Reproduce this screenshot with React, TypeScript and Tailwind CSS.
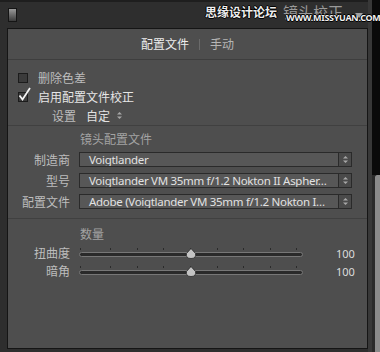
import React from 'react'

const CJK = "font-['Noto_Sans_CJK_SC','Noto_Sans',sans-serif]"
const LATIN = "font-['Noto_Sans','Open_Sans',sans-serif]"

function Stepper() {
  return (
    <svg width="7" height="9" viewBox="0 0 7 9" className="block">
      <path d="M1 3.5 L3.5 1 L6 3.5 Z" fill="#a8a8a8" />
      <path d="M1 5.5 L3.5 8 L6 5.5 Z" fill="#a8a8a8" />
    </svg>
  )
}

function Checkbox({ checked }: { checked?: boolean }) {
  return (
    <div className="relative w-[10px] h-[10px] border border-[#1c1c1c] bg-[#3b3b3b]">
      {checked && (
        <svg width="14" height="15" viewBox="0 0 14 15" className="absolute left-[-1px] top-[-6px]">
          <path d="M1.5 8.5 L4.5 12.5 L12 1" stroke="#f2f2f2" strokeWidth="1.8" fill="none" />
        </svg>
      )}
    </div>
  )
}

function SelectRow({ label, value }: { label: string; value: string }) {
  return (
    <div className="flex items-center h-[15px]">
      <span className={`${CJK} w-[62px] text-right text-[12px] text-[#bdbdbd] leading-none`}>{label}</span>
      <div className="ml-[9px] flex h-[15px]">
        <div className="w-[260px] h-full bg-[#575757] border border-[#2a2a2a] flex items-center pl-[9px] overflow-hidden">
          <span className={`${LATIN} text-[11.5px] tracking-[-0.3px] text-[#e2e2e2] leading-none whitespace-nowrap`}>{value}</span>
        </div>
        <div className="w-[13px] h-full bg-[#4a4a4a] border border-[#2a2a2a] border-l-0 flex items-center justify-center">
          <Stepper />
        </div>
      </div>
    </div>
  )
}

const TICKS = [1, 31, 58, 84, 111, 138, 164, 191, 217]

function SliderRow({ label, value }: { label: string; value: number }) {
  return (
    <div className="flex items-center h-[18px]">
      <span className={`${CJK} w-[62px] text-right text-[12px] text-[#bdbdbd] leading-none`}>{label}</span>
      <div className="relative ml-[9px] w-[224px] h-[18px]">
        {TICKS.map((t) => (
          <div key={t} className="absolute top-[4px] w-px h-[2px] bg-[#2a2a2a]" style={{ left: t }} />
        ))}
        <div className="absolute left-0 right-0 top-[8px] h-[5px] rounded-full bg-[#2a2a2a] border border-[#777]" />
        <svg width="12" height="11" viewBox="0 0 12 11" className="absolute left-[106px] top-[4px]">
          <path d="M6 0.5 L10.5 5.5 Q11.5 10.5 6 10.5 Q0.5 10.5 1.5 5.5 Z" fill="#c4c4c4" stroke="#2a2a2a" strokeWidth="0.8" />
        </svg>
      </div>
      <span className={`${LATIN} ml-[33px] text-[11px] text-[#dcdcdc] leading-none`}>{value}</span>
    </div>
  )
}

export default function App() {
  return (
    <div className="w-[380px] h-[352px] bg-[#2e2e2e] flex overflow-hidden">
      <div className="w-[368px] flex flex-col">
        {/* header */}
        <div className="relative h-[28px] border-t-2 border-[#1e1e1e] flex items-center">
          <div className="ml-[8px] w-[9px] h-[14px] border border-[#151515] bg-gradient-to-b from-[#9a9a9a] via-[#6a6a6a] to-[#3c3c3c]" />
          <span
            className={`${CJK} absolute left-[205px] top-[4px] text-[12px] font-bold text-[#ededed] leading-none`}
            style={{ textShadow: '1px 0 0 #000,-1px 0 0 #000,0 1px 0 #000,0 -1px 0 #000' }}
          >
            思缘设计论坛
          </span>
          <span className={`${CJK} absolute left-[283px] top-[2px] text-[15px] text-[#9a9a9a] leading-none`}>镜头校正</span>
          <span
            className={`${LATIN} absolute left-[286px] top-[11px] text-[9px] font-bold text-[#f0f0f0] leading-none tracking-[-0.3px]`}
            style={{ textShadow: '1px 0 0 #000,-1px 0 0 #000,0 1px 0 #000,0 -1px 0 #000' }}
          >
            WWW.MISSYUAN.COM
          </span>
          <svg width="8" height="5" viewBox="0 0 8 5" className="absolute left-[355px] top-[11px]">
            <path d="M0 0 H8 L4 5 Z" fill="#a0a0a0" />
          </svg>
        </div>

        {/* panel */}
        <div className="ml-[7px] w-[361px] h-[321px] bg-[#4e4e4e] border border-[#151515] flex flex-col">
          <div className="h-[31px] flex items-center justify-center border-b border-[#3e3e3e]">
            <span className={`${CJK} text-[12px] text-[#ececec] leading-none`}>配置文件</span>
            <span className="mx-[10px] w-px h-[11px] bg-[#6a6a6a]" />
            <span className={`${CJK} text-[12px] text-[#b5b5b5] leading-none`}>手动</span>
          </div>

          <div className="flex flex-col pt-[9px] h-[66px] border-b border-[#404040]">
            <div className="flex items-center h-[19px] pl-[10px]">
              <Checkbox />
              <span className={`${CJK} ml-[10px] text-[12px] text-[#bdbdbd] leading-none`}>删除色差</span>
            </div>
            <div className="flex items-center h-[19px] pl-[10px]">
              <Checkbox checked />
              <span className={`${CJK} ml-[10px] text-[12px] text-[#e6e6e6] leading-none`}>启用配置文件校正</span>
            </div>
            <div className="flex items-center h-[19px] pl-[44px]">
              <span className={`${CJK} text-[12px] text-[#bdbdbd] leading-none`}>设置</span>
              <span className={`${CJK} ml-[10px] text-[12px] text-[#e2e2e2] leading-none`}>自定</span>
              <span className="ml-[6px]"><Stepper /></span>
            </div>
          </div>

          <div className="flex flex-col h-[93px] border-b border-[#404040]">
            <div className="h-[26px] flex items-center pl-[72px]">
              <span className={`${CJK} text-[12px] text-[#a3a3a3] leading-none`}>镜头配置文件</span>
            </div>
            <div className="flex flex-col gap-[6px]">
              <SelectRow label="制造商" value="Voigtlander" />
              <SelectRow label="型号" value="Voigtlander VM 35mm f/1.2 Nokton II Aspher…" />
              <SelectRow label="配置文件" value="Adobe (Voigtlander VM 35mm f/1.2 Nokton I…" />
            </div>
          </div>

          <div className="flex flex-col">
            <div className="h-[25px] flex items-center pl-[72px] pt-[4px]">
              <span className={`${CJK} text-[12px] text-[#a3a3a3] leading-none`}>数量</span>
            </div>
            <SliderRow label="扭曲度" value={100} />
            <SliderRow label="暗角" value={100} />
          </div>
        </div>
      </div>

      {/* right strip */}
      <div className="w-[12px] flex">
        <div className="w-[4px] bg-[#383838]" />
        <div className="w-[8px] bg-[#0a0a0a] flex flex-col">
          <div className="h-[175px]" />
          <div className="flex-1 flex">
            <div className="w-[3px] bg-[#2a2a2a]" />
            <div className="flex-1 bg-[#8a8a8a] rounded-tl-[2px]" />
          </div>
        </div>
      </div>
    </div>
  )
}
